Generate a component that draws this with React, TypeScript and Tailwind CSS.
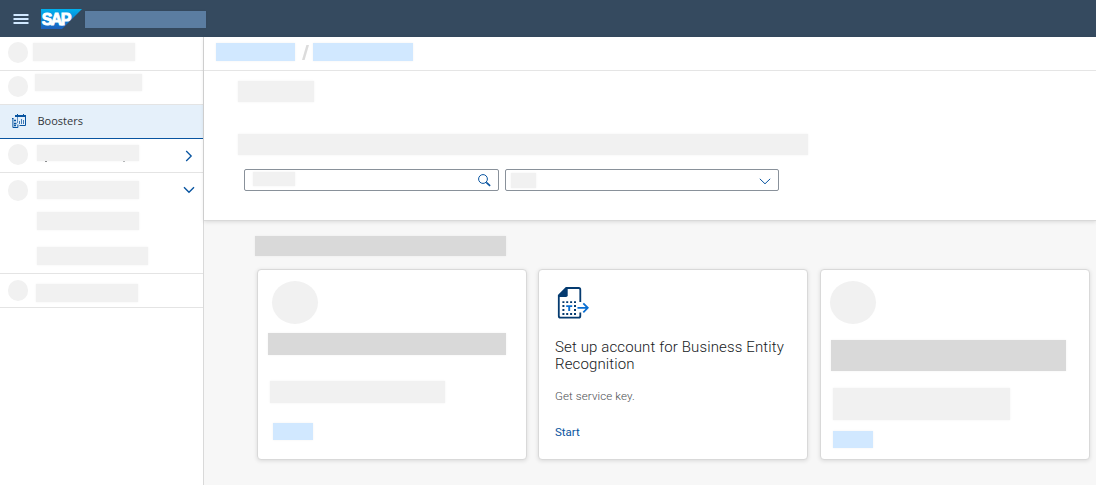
import React from "react";

function Bar({ className }: { className: string }) {
  return <div className={`shrink-0 shadow-[0_0_2px_rgba(0,0,0,0.06)] ${className}`} />;
}

function Dot() {
  return <div className="ml-2 h-[21px] w-5 shrink-0 rounded-full bg-[#f1f1f1]" />;
}

function MenuIcon() {
  return (
    <svg className="ml-[13px] mt-[13px] h-3 w-4 shrink-0" viewBox="0 0 16 12" fill="#d1e8ff">
      <rect x="0.5" y="1" width="15" height="2" />
      <rect x="0.5" y="5" width="15" height="2" />
      <rect x="0.5" y="9" width="15" height="2" />
    </svg>
  );
}

function SapLogo() {
  return (
    <svg className="ml-3 mt-[9px] h-5 w-[41px] shrink-0" viewBox="0 0 41 20">
      <defs>
        <linearGradient id="sap" x1="0" y1="0" x2="0" y2="1">
          <stop offset="0" stopColor="#00b2ef" />
          <stop offset="0.5" stopColor="#0a85d6" />
          <stop offset="1" stopColor="#1d60bd" />
        </linearGradient>
      </defs>
      <polygon points="0,0 41,0 21,20 0,20" fill="url(#sap)" />
      <text
        x="0.8"
        y="15.6"
        textLength="29.5"
        lengthAdjust="spacing"
        fill="#fff"
        stroke="#fff"
        strokeWidth="0.9"
        fontFamily="Liberation Sans, sans-serif"
        fontWeight="700"
        fontSize="16"
      >
        SAP
      </text>
    </svg>
  );
}

function BoostersIcon() {
  return (
    <svg className="ml-3 h-[15px] w-[15px] shrink-0" viewBox="0 0 15 15" fill="none" stroke="#0854a0">
      <path d="M13.5 1.5v10h-6" />
      <path d="M3 2h11" strokeWidth="2" />
      <path d="M5.5 0v2M11.5 0v2" />
      <path d="M0 4.5h1.5M.9 4.5v9h5v-3" />
      <path d="M5.5 3v6" strokeOpacity="0.6" />
      <path d="M2 6.5h2M2 9.5h2.5M2 11.5h2" strokeWidth="1.3" />
      <path d="M7.5 7v3M9.5 5v5M11.5 6v4" strokeOpacity="0.75" />
    </svg>
  );
}

function DocumentIcon() {
  return (
    <svg className="ml-[17.5px] mt-[17px] h-8 w-8 shrink-0" viewBox="0 0 32 32" fill="none">
      <path
        d="M23.3 15V2.7Q23.3 1 21.8 1H9.2L1.8 8.4V29q0 1.7 1.7 1.7h18.1q1.7 0 1.7-1.7v-3.4"
        stroke="#053b70"
        strokeWidth="1.8"
      />
      <path d="M9.2 1H10.7v7.3q0 1.7-1.7 1.7H1.8V8.4z" fill="#053b70" />
      <path d="M5.4 15.1h2M9.2 15.1h2M13.1 15.1h2M17 15.1h2M5.4 27h2M9.2 27h2M13.1 27h2M17 27h2" stroke="#053b70" strokeWidth="1.9" />
      <path d="M5.4 19h2M5.4 23h2M17 19h2M17 23h2" stroke="#053b70" strokeWidth="1.9" />
      <path d="M9.2 19.1h6M12.2 18.5v5.5" stroke="#0a6ed1" strokeWidth="1.9" />
      <path d="M20.5 20.8h10M26.3 16.3l4.5 4.5-4.5 4.5" stroke="#0a6ed1" strokeWidth="1.8" />
    </svg>
  );
}

function Header() {
  return (
    <header className="flex h-[37px] shrink-0 items-start bg-[#354a5f]">
      <MenuIcon />
      <SapLogo />
      <Bar className="ml-[3px] mt-[11px] h-[17px] w-[121px] bg-[#5b7da1]" />
    </header>
  );
}

function Sidebar() {
  return (
    <nav className="flex w-[204px] shrink-0 flex-col border-r border-[#d9d9d9] bg-white">
      <div className="flex h-[34px] items-start border-b border-[#e4e4e4] pt-[5px]">
        <Dot />
        <Bar className="ml-[5px] mt-px h-[18px] w-[102px] bg-[#f1f1f1]" />
      </div>
      <div className="flex h-[34px] items-start border-b border-[#e4e4e4] pt-[3px]">
        <div className="mt-0.5">
          <Dot />
        </div>
        <Bar className="ml-[7px] h-[17px] w-[107px] bg-[#f1f1f1]" />
      </div>
      <div className="flex h-[34px] items-center border-b border-[#0854a0] bg-[#e5f0fa]">
        <BoostersIcon />
        <span className="mb-0.5 ml-[10.5px] font-['Open_Sans',sans-serif] text-[11px] leading-4 text-[#32363a]">
          Boosters
        </span>
      </div>
      <div className="flex h-[34px] items-start border-b border-[#e4e4e4] pt-[5px]">
        <Dot />
        <div className="ml-[9px] mt-px w-[102px] shrink-0">
          <Bar className="h-4 bg-[#f1f1f1]" />
          <div className="flex justify-between pl-2 pr-3.5">
            <span className="h-px w-0.5 bg-[#8a8c8e]" />
            <span className="h-px w-0.5 bg-[#b4b6b8]" />
          </div>
        </div>
        <svg className="ml-[46px] mt-1.5 h-3 w-2" viewBox="0 0 8 12" fill="none" stroke="#0854a0" strokeWidth="1.3">
          <path d="M1.2 1l5 5-5 5" />
        </svg>
      </div>
      <div className="h-[101px] border-b border-[#e4e4e4] pt-[7px]">
        <div className="flex items-start">
          <Dot />
          <Bar className="ml-[9px] mt-px h-[18px] w-[102px] bg-[#f1f1f1]" />
          <svg className="ml-11 mt-1.5 h-2 w-3" viewBox="0 0 12 8" fill="none" stroke="#0854a0" strokeWidth="1.4">
            <path d="M1 1.3l5 5 5-5" />
          </svg>
        </div>
        <Bar className="ml-[37px] mt-[11px] h-[18px] w-[102px] bg-[#f1f1f1]" />
        <Bar className="ml-[37px] mt-[17px] h-[18px] w-[111px] bg-[#f1f1f1]" />
      </div>
      <div className="flex h-[34px] items-start border-b border-[#e4e4e4] pt-1.5">
        <Dot />
        <Bar className="ml-2 mt-1 h-[18px] w-[102px] bg-[#f1f1f1]" />
      </div>
    </nav>
  );
}

function Filters() {
  return (
    <div className="ml-10 mt-3.5 flex gap-1.5">
      <div className="flex h-[22px] w-[255px] items-start rounded-[2px] border border-[#89919a] bg-white">
        <Bar className="ml-2 mt-0.5 h-3.5 w-[42px] bg-[#f1f1f1]" />
        <svg className="ml-auto mr-[7px] mt-1 h-[13px] w-[13px]" viewBox="0 0 13 13" fill="none" stroke="#0854a0">
          <circle cx="5" cy="5" r="4.4" />
          <path d="M8.3 8.3l3.8 3.5" strokeWidth="1.7" />
        </svg>
      </div>
      <div className="flex h-[22px] w-[274px] items-start rounded-[2px] border border-[#89919a] bg-white">
        <Bar className="ml-[5px] mt-[3px] h-[15px] w-[25px] bg-[#f1f1f1]" />
        <svg className="ml-auto mr-[7px] mt-2 h-[7px] w-3" viewBox="0 0 12 7" fill="none" stroke="#0854a0">
          <path d="M.8.8L6 5.8 11.2.8" />
        </svg>
      </div>
    </div>
  );
}

function Card({ className = "", children }: { className?: string; children: React.ReactNode }) {
  return (
    <article
      className={`flex h-[191px] w-[270px] shrink-0 flex-col rounded-[4px] border border-[#d9d9d9] bg-white shadow-[0_1px_4px_rgba(0,0,0,0.12)] ${className}`}
    >
      {children}
    </article>
  );
}

export default function App() {
  return (
    <div className="flex h-[485px] w-[1096px] flex-col overflow-hidden bg-[#f7f7f7] font-['Roboto',sans-serif]">
      <Header />
      <div className="flex min-h-0 flex-1">
        <Sidebar />
        <main className="flex min-w-0 flex-1 flex-col">
          <section className="h-[184px] shrink-0 border-b border-[#d9d9d9] bg-white shadow-[0_1px_4px_rgba(0,0,0,0.12)]">
            <div className="flex h-[34px] items-start border-b border-[#e5e5e5] pt-1.5">
              <Bar className="ml-3 h-[18px] w-[79px] bg-[#d1e8ff]" />
              <svg className="ml-[7px] mt-0.5 h-[15px] w-[7px]" viewBox="0 0 7 15">
                <path d="M4.4 0H7L2.6 15H0z" fill="#dcdcdc" />
              </svg>
              <Bar className="ml-1 h-[18px] w-[100px] bg-[#d1e8ff]" />
            </div>
            <Bar className="ml-[34px] mt-2.5 h-[21px] w-[76px] bg-[#f1f1f1]" />
            <Bar className="ml-[34px] mt-8 h-[21px] w-[570px] bg-[#f1f1f1]" />
            <Filters />
          </section>
          <Bar className="ml-[51px] mt-[15px] h-5 w-[251px] bg-[#d9d9d9]" />
          <div className="ml-[53px] mt-[13px] flex">
            <Card>
              <div className="ml-3.5 mt-[11px] h-[43px] w-[46px] rounded-[50%] bg-[#f1f1f1]" />
              <Bar className="ml-2.5 mt-[9px] h-[22px] w-[238px] bg-[#d9d9d9]" />
              <Bar className="ml-3 mt-[26px] h-[22px] w-[175px] bg-[#f1f1f1]" />
              <Bar className="ml-[15px] mt-5 h-[17px] w-10 bg-[#d1e8ff]" />
            </Card>
            <Card className="ml-[11px]">
              <DocumentIcon />
              <h2 className="ml-4 mt-5 text-[15px] font-light leading-[17px] tracking-[0.13px] text-[#16191c]">
                Set up account for Business Entity
                <br />
                Recognition
              </h2>
              <p className="ml-4 mt-[15px] text-[11.5px] font-light leading-4 tracking-[0.12px] text-[#4a4d50]">
                Get service key.
              </p>
              <a className="ml-4 mt-5 text-[11.5px] leading-4 text-[#0854a0]">Start</a>
            </Card>
            <Card className="ml-3">
              <div className="ml-[9px] mt-[11px] h-[43px] w-[46px] rounded-[50%] bg-[#f1f1f1]" />
              <Bar className="ml-2.5 mt-4 h-[31px] w-[235px] bg-[#d9d9d9]" />
              <Bar className="ml-3 mt-[17px] h-8 w-[177px] bg-[#f1f1f1]" />
              <Bar className="ml-3 mt-[11px] h-[17px] w-10 bg-[#d1e8ff]" />
            </Card>
          </div>
        </main>
      </div>
    </div>
  );
}
